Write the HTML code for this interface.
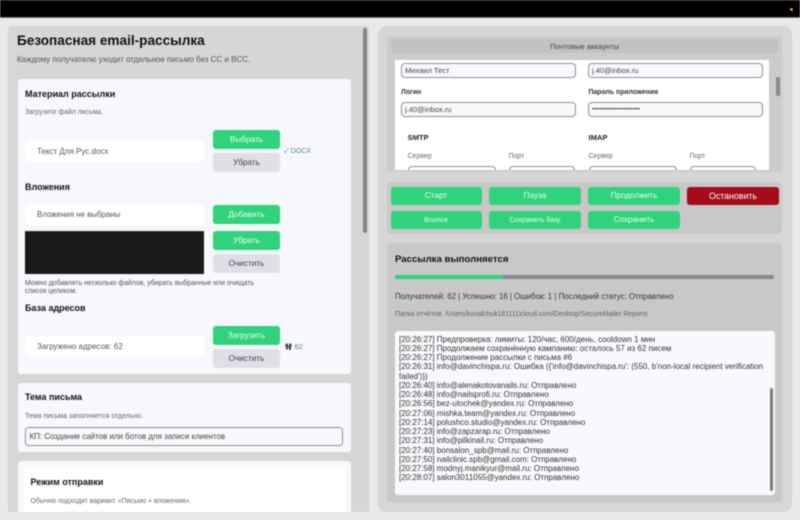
<!DOCTYPE html>
<html lang="ru">
<head>
<meta charset="utf-8">
<title>Безопасная email-рассылка</title>
<style>
html,body{margin:0;padding:0;width:800px;height:520px;overflow:hidden;background:#e9e9e9}
body{position:relative;font-family:"Liberation Sans","Noto Sans CJK SC",sans-serif;color:#111}
#w{position:absolute;left:0;top:0;width:800px;height:520px;overflow:hidden;filter:blur(.45px)}
.a{position:absolute}
.t{position:absolute;white-space:nowrap;line-height:1}
.b{font-weight:bold}
.card{position:absolute;background:#f7f8fc;border-radius:3px}
.btn{position:absolute;display:flex;align-items:center;justify-content:center;border-radius:3px;font-size:8.2px;white-space:nowrap;line-height:1;box-sizing:border-box;padding-top:1px}
.g{background:#30d27b;color:#eafff2}
.n{background:#e0e0e4;color:#444}
.fld{position:absolute;background:#fff;border-radius:5px;font-size:8px;color:#555;display:flex;align-items:center;box-sizing:border-box;padding-left:12px;white-space:nowrap}
.in{position:absolute;box-sizing:border-box;background:#f7f8fc;border:1.3px solid #8e9096;border-radius:4px;font-size:7.5px;color:#444;display:flex;align-items:center;padding-left:3px;white-space:nowrap}
.log{position:absolute;left:399px;top:334.5px;width:372px;font-size:8px;line-height:9.27px;color:#333;white-space:nowrap}
</style>
</head>
<body>
<div id="w">
<div class="a" style="left:0;top:0;width:800px;height:17px;background:#000"></div>
<div class="a" style="left:0;top:17px;width:800px;height:1px;background:#777"></div>
<div class="a" style="left:790px;top:8px;width:3px;height:3px;border-radius:50%;background:#e8953a"></div>

<!-- left panel -->
<div class="a" style="left:8px;top:26px;width:361px;height:486px;background:#d6d6d6;border-radius:3px 0 0 0"></div>
<div class="a" style="left:363px;top:28px;width:4px;height:205px;background:#858585;border-radius:2px"></div>
<div class="t b" style="left:17px;top:33.5px;font-size:13.6px">Безопасная email-рассылка</div>
<div class="t" style="left:17px;top:55.5px;font-size:8px;color:#555">Каждому получателю уходит отдельное письмо без CC и BCC.</div>

<div class="card" style="left:17.5px;top:79px;width:333px;height:295px"></div>
<div class="t b" style="left:25px;top:89.5px;font-size:9px">Материал рассылки</div>
<div class="t" style="left:25px;top:109.5px;font-size:6.9px;color:#666">Загрузите файл письма.</div>
<div class="fld" style="left:25px;top:140px;width:179px;height:22px">Текст Для Рус.docx</div>
<div class="btn g" style="left:213px;top:130px;width:67px;height:18.5px">Выбрать</div>
<div class="btn n" style="left:213px;top:153px;width:67px;height:18.5px">Убрать</div>
<div class="t" style="left:284px;top:148px;font-size:7px;color:#4f8d84">✓ DOCX</div>

<div class="t b" style="left:25px;top:182.5px;font-size:9px">Вложения</div>
<div class="fld" style="left:25px;top:204px;width:179px;height:21px;font-size:7.9px">Вложения не выбраны</div>
<div class="btn g" style="left:213px;top:205px;width:67px;height:18.5px">Добавить</div>
<div class="a" style="left:25px;top:231px;width:179px;height:42.5px;background:#1a1a1a;border-top:1px solid #333;box-sizing:border-box"></div>
<div class="btn g" style="left:213px;top:231px;width:67px;height:18.5px">Убрать</div>
<div class="btn n" style="left:213px;top:254px;width:67px;height:18.5px">Очистить</div>
<div class="t" style="left:25px;top:279.5px;font-size:6.9px;line-height:8.4px;color:#555">Можно добавлять несколько файлов, убирать выбранные или очищать<br>список целиком.</div>

<div class="t b" style="left:25px;top:304px;font-size:9px">База адресов</div>
<div class="fld" style="left:25px;top:336px;width:179px;height:21px">Загружено адресов: 62</div>
<div class="btn g" style="left:213px;top:326px;width:67px;height:18.5px">Загрузить</div>
<div class="btn n" style="left:213px;top:349px;width:67px;height:18.5px">Очистить</div>
<svg class="a" style="left:284.5px;top:343px" width="7" height="7" viewBox="0 0 7 7"><path d="M1 .5h2V3h1V.5h2L7 3 6 4v3H4V4.5H3V6.5H1V4L0 3z" fill="#4c4a50"/></svg>
<div class="t" style="left:294.5px;top:343px;font-size:7.5px;color:#3f8a8a">62</div>

<div class="card" style="left:17.5px;top:383px;width:333px;height:69px"></div>
<div class="t b" style="left:25px;top:392.7px;font-size:9px">Тема письма</div>
<div class="t" style="left:25px;top:413px;font-size:7px;color:#666">Тема письма заполняется отдельно.</div>
<div class="in" style="left:25px;top:427px;width:318px;height:18.5px;font-size:7.95px;background:#f8f8fb;padding-left:3.5px;border-radius:3px">КП: Создание сайтов или ботов для записи клиентов</div>

<div class="card" style="left:17.5px;top:461px;width:333px;height:51px;border-radius:3px 3px 0 0"></div>
<div class="a" style="left:24px;top:467px;width:320.5px;height:45px;background:#fff;border-radius:2px 2px 0 0"></div>
<div class="t b" style="left:30.5px;top:477.5px;font-size:9px">Режим отправки</div>
<div class="t" style="left:30.5px;top:498.5px;font-size:6.95px;color:#666">Обычно подходит вариант «Письмо + вложения».</div>

<!-- right panel -->
<div class="a" style="left:378px;top:26px;width:414px;height:486px;background:#d6d6d6;border-radius:9px"></div>

<div class="a" style="left:387px;top:36px;width:395px;height:136px;background:#cbcbcb;border-radius:3px"></div>
<div class="a" style="left:391px;top:39px;width:387px;height:14px;background:#c2c2c2;border-radius:3px;font-size:7.6px;color:#444;display:flex;align-items:center;justify-content:center">Почтовые аккаунты</div>
<div class="a" style="left:394.5px;top:60px;width:374px;height:110px;background:#fff;overflow:hidden">
  <div class="in" style="left:6.5px;top:3px;width:175px;height:15px">Михаил Тест</div>
  <div class="in" style="left:193.5px;top:3px;width:175px;height:15px">j.40@inbox.ru</div>
  <div class="t b" style="left:6.5px;top:29.5px;font-size:6.9px;color:#333">Логин</div>
  <div class="t b" style="left:194px;top:29.5px;font-size:6.9px;color:#333">Пароль приложения</div>
  <div class="in" style="left:6.5px;top:42px;width:175px;height:15px">j.40@inbox.ru</div>
  <div class="in" style="left:193.5px;top:42px;width:175px;height:15px;font-size:6.5px">•••••••••••••••••••••</div>
  <div class="t b" style="left:13px;top:73.5px;font-size:7.6px;color:#222">SMTP</div>
  <div class="t b" style="left:194px;top:73.5px;font-size:7.6px;color:#222">IMAP</div>
  <div class="t" style="left:13px;top:93px;font-size:7px;color:#666">Сервер</div>
  <div class="t" style="left:114px;top:93px;font-size:7px;color:#666">Порт</div>
  <div class="t" style="left:194px;top:93px;font-size:7px;color:#666">Сервер</div>
  <div class="t" style="left:295px;top:93px;font-size:7px;color:#666">Порт</div>
  <div class="in" style="left:13px;top:106px;width:88px;height:15px;background:#fff"></div>
  <div class="in" style="left:114px;top:106px;width:66px;height:15px;background:#fff"></div>
  <div class="in" style="left:194px;top:106px;width:88px;height:15px;background:#fff"></div>
  <div class="in" style="left:295px;top:106px;width:66px;height:15px;background:#fff"></div>
</div>
<div class="a" style="left:776px;top:77px;width:4px;height:19px;background:#8a8a8a;border-radius:1px"></div>

<div class="a" style="left:387px;top:182px;width:395px;height:52px;background:#c8c8c8;border-radius:3px"></div>
<div class="btn g" style="left:390.5px;top:186.5px;width:91px;height:18.5px">Старт</div>
<div class="btn g" style="left:489px;top:186.5px;width:92px;height:18.5px">Пауза</div>
<div class="btn g" style="left:588px;top:186.5px;width:92px;height:18.5px">Продолжить</div>
<div class="btn" style="left:687px;top:186.5px;width:92px;height:18.5px;background:#a30c18;color:#fff;font-size:8.8px">Остановить</div>
<div class="btn g" style="left:390.5px;top:210.5px;width:91px;height:18.5px;font-size:7px">Bounce</div>
<div class="btn g" style="left:489px;top:210.5px;width:92px;height:18.5px;font-size:7px">Сохранить базу</div>
<div class="btn g" style="left:588px;top:210.5px;width:92px;height:18.5px">Сохранить</div>

<div class="a" style="left:387px;top:243px;width:395px;height:259px;background:#c8c8c8;border-radius:3px"></div>
<div class="t b" style="left:395px;top:254.5px;font-size:9.65px">Рассылка выполняется</div>
<div class="a" style="left:395px;top:274.5px;width:379px;height:4.5px;background:#858a91;border-radius:2px"></div>
<div class="a" style="left:395px;top:274.5px;width:107.5px;height:4.5px;background:#30d27b;border-radius:2px 0 0 2px"></div>
<div class="t" style="left:395px;top:292.5px;font-size:7.9px;color:#333">Получателей: 62 | Успешно: 16 | Ошибок: 1 | Последний статус: Отправлено</div>
<div class="t" style="left:395px;top:311.5px;font-size:6.9px;color:#5a5f68">Папка отчётов: /Users/kovalchuk181111icloud.com/Desktop/SecureMailer Reports</div>

<div class="a" style="left:394.5px;top:331px;width:380.5px;height:164px;background:#f8f9fc;border-radius:3px"></div>
<div class="log">
[20:26:27] Предпроверка: лимиты: 120/час, 600/день, cooldown 1 мин<br>
[20:26:27] Продолжаем сохранённую кампанию: осталось 57 из 62 писем<br>
[20:26:27] Продолжение рассылки с письма #6<br>
[20:26:31] info@davinchispa.ru: Ошибка ({'info@davinchispa.ru': (550, b'non-local recipient verification<br>
failed')})<br>
[20:26:40] info@alenakotovanails.ru: Отправлено<br>
[20:26:48] info@nailsprofi.ru: Отправлено<br>
[20:26:56] bez-utochek@yandex.ru: Отправлено<br>
[20:27:06] mishka.team@yandex.ru: Отправлено<br>
[20:27:14] polushco.studio@yandex.ru: Отправлено<br>
[20:27:23] info@zapzarap.ru: Отправлено<br>
[20:27:31] info@pilkinail.ru: Отправлено<br>
[20:27:40] bonsalon_spb@mail.ru: Отправлено<br>
[20:27:50] nailclinic.spb@gmail.com: Отправлено<br>
[20:27:58] modnyj.manikyur@mail.ru: Отправлено<br>
[20:28:07] salon3011055@yandex.ru: Отправлено
</div>
<div class="a" style="left:769.5px;top:388px;width:3.5px;height:103px;background:#7a7a7a;border-radius:2px"></div>
</div>
</body>
</html>
